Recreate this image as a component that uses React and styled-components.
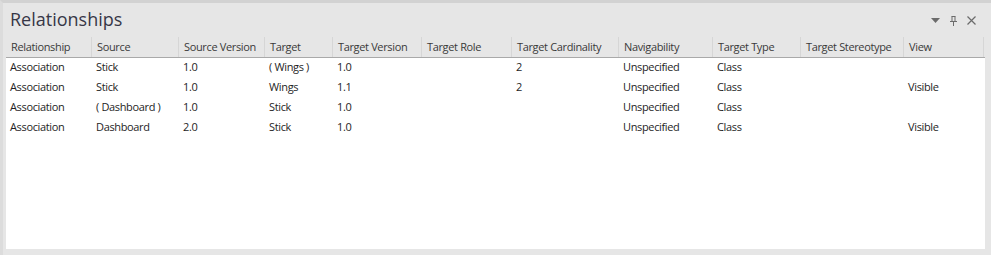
import styled, { createGlobalStyle } from "styled-components";

const GlobalStyle = createGlobalStyle`
    html, body {
        margin: 0;
        padding: 0;
        background: #e6e6e6;
    }
    * {
        box-sizing: border-box;
    }
`

const columns = [
    { label: "Relationship", key: "relationship", width: 86 },
    { label: "Source", key: "source", width: 87 },
    { label: "Source Version", key: "sourceVersion", width: 86 },
    { label: "Target", key: "target", width: 68 },
    { label: "Target Version", key: "targetVersion", width: 89 },
    { label: "Target Role", key: "targetRole", width: 90 },
    { label: "Target Cardinality", key: "targetCardinality", width: 107 },
    { label: "Navigability", key: "navigability", width: 94 },
    { label: "Target Type", key: "targetType", width: 88 },
    { label: "Target Stereotype", key: "targetStereotype", width: 103 },
    { label: "View", key: "view", width: 80 },
]

const rows = [
    { id: 1, relationship: "Association", source: "Stick", sourceVersion: "1.0", target: "( Wings )", targetVersion: "1.0", targetCardinality: "2", navigability: "Unspecified", targetType: "Class" },
    { id: 2, relationship: "Association", source: "Stick", sourceVersion: "1.0", target: "Wings", targetVersion: "1.1", targetCardinality: "2", navigability: "Unspecified", targetType: "Class", view: "Visible" },
    { id: 3, relationship: "Association", source: "( Dashboard )", sourceVersion: "1.0", target: "Stick", targetVersion: "1.0", navigability: "Unspecified", targetType: "Class" },
    { id: 4, relationship: "Association", source: "Dashboard", sourceVersion: "2.0", target: "Stick", targetVersion: "1.0", navigability: "Unspecified", targetType: "Class", view: "Visible" },
]

const template = columns.map(c => `${c.width}px`).join(" ")

const App = () => {
    return (
        <>
            <GlobalStyle />
            <Window>
                <TitleBar>
                    <Title>Relationships</Title>
                    <Controls>
                        <svg width="9" height="6" viewBox="0 0 9 6">
                            <path d="M0 0 H9 L4.5 5 Z" fill="#6b6b6b" />
                        </svg>
                        <svg width="9" height="10" viewBox="0 0 9 10">
                            <path d="M2.5 0.5 H6.5 M3 0.5 V5.5 M6 0.5 V5.5 M1 5.5 H8 M4.5 5.5 V10" stroke="#6b6b6b" strokeWidth="1" fill="none" />
                        </svg>
                        <svg width="9" height="9" viewBox="0 0 9 9">
                            <path d="M0.5 0.5 L8.5 8.5 M8.5 0.5 L0.5 8.5" stroke="#6b6b6b" strokeWidth="1.2" fill="none" />
                        </svg>
                    </Controls>
                </TitleBar>
                <Grid>
                    <HeaderRow>
                        {columns.map(c => (
                            <HeaderCell key={c.key}>{c.label}</HeaderCell>
                        ))}
                    </HeaderRow>
                    <Body>
                        {rows.map(r => (
                            <DataRow key={r.id}>
                                {columns.map(c => (
                                    <Cell key={c.key}>{r[c.key] || ""}</Cell>
                                ))}
                            </DataRow>
                        ))}
                    </Body>
                </Grid>
            </Window>
        </>
    )
}

const Window = styled.div`
    width: 991px;
    height: 255px;
    display: flex;
    flex-direction: column;
    background: #e6e6e6;
    border-top: 3px solid #d2d2d2;
    border-left: 3px solid #dcdcdc;
    font-family: "Open Sans", "Noto Sans", sans-serif;
`

const TitleBar = styled.div`
    display: flex;
    align-items: center;
    justify-content: space-between;
    height: 34px;
    padding: 0 15px 0 7px;
`

const Title = styled.h1`
    margin: 0;
    font-size: 18px;
    font-weight: normal;
    color: #373746;
    padding-bottom: 2px;
`

const Controls = styled.div`
    display: flex;
    align-items: center;
    gap: 9px;
    padding-top: 1px;
`

const Grid = styled.div`
    display: flex;
    flex-direction: column;
    margin: 0 6px 6px 3px;
    flex: 1;
`

const HeaderRow = styled.div`
    display: grid;
    grid-template-columns: ${template};
    height: 21px;
    border-bottom: 1px solid #a9a9a9;
    background: #e6e6e6;
`

const HeaderCell = styled.div`
    display: flex;
    align-items: center;
    padding: 0 0 2px 5px;
    font-size: 11px;
    color: #3a3a3a;
    white-space: nowrap;
    overflow: hidden;
    border-right: 1px solid #d6d6d6;
    letter-spacing: -0.35px;
`

const Body = styled.div`
    flex: 1;
    background: #ffffff;
`

const DataRow = styled.div`
    display: grid;
    grid-template-columns: ${template};
    height: 20px;
`

const Cell = styled.div`
    display: flex;
    align-items: center;
    padding: 0 0 3px 4px;
    font-size: 11px;
    color: #1e1e1e;
    white-space: nowrap;
    overflow: hidden;
    letter-spacing: -0.35px;
`

export default App
